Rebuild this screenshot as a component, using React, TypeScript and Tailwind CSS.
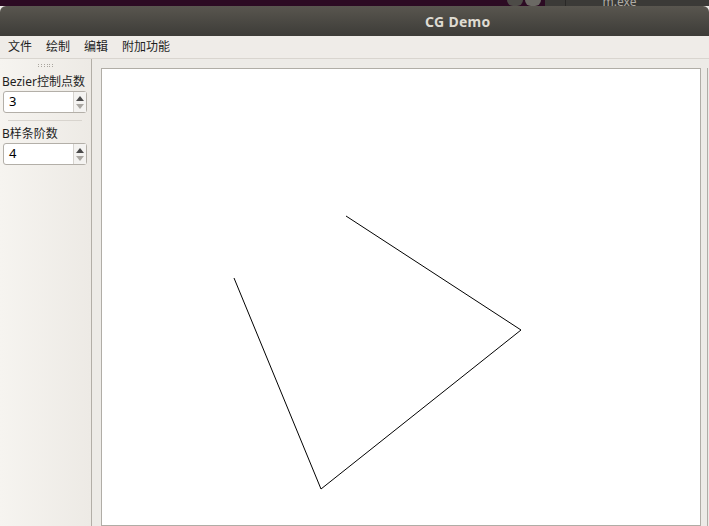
import React from 'react';

const font = { fontFamily: '"Noto Sans", "Noto Sans CJK SC", sans-serif' };

function SpinBox({ value }: { value: string }) {
  return (
    <div className="ml-[3px] flex h-[22px] w-[84px] rounded-[3px] border border-[#b3afa8] bg-white">
      <div className="flex flex-1 items-center pl-[5px] text-[13px] text-black">{value}</div>
      <div className="flex w-[13px] flex-col items-center justify-center gap-[3px] border-l border-[#d6d3ce] bg-[#f4f3f1]">
        <svg width="8" height="5" viewBox="0 0 8 5">
          <path d="M0 5 L4 0 L8 5 Z" fill="#4a4a4a" />
        </svg>
        <svg width="8" height="5" viewBox="0 0 8 5">
          <path d="M0 0 L8 0 L4 5 Z" fill="#aaa7a2" />
        </svg>
      </div>
    </div>
  );
}

function Handle() {
  return (
    <div className="ml-[38px] mt-[5px] grid w-[16px] grid-cols-6 gap-x-[1px] gap-y-[1px]">
      {Array.from({ length: 12 }).map((_, i) => (
        <div key={i} className="h-[1px] w-[1px] bg-[#a9a59e]" />
      ))}
    </div>
  );
}

export default function App() {
  return (
    <div className="flex h-[526px] w-[709px] flex-col overflow-hidden bg-[#edebe7]" style={font}>
      {/* desktop strip behind the window */}
      <div className="flex h-[6px] shrink-0">
        <div className="w-[507px] bg-[#2c0b23]" />
        <div className="flex w-[38px] items-end gap-[2px] bg-[#2c0b23]">
          <div className="h-[6px] w-[16px] rounded-b-full bg-[#4d4b47]" />
          <div className="h-[6px] w-[16px] rounded-b-full bg-[#6b6964]" />
        </div>
        <div className="w-[20px] bg-[#3b3a37]" />
        <div className="flex-1 overflow-hidden border-l border-[#2a2927] bg-[#3b3a37] pl-[25px] text-[12px] leading-[4px] text-[#aeaba4]">
          _&nbsp;&nbsp;m.exe
        </div>
      </div>

      {/* title bar */}
      <div className="flex h-[30px] shrink-0 items-center rounded-t-[6px] bg-gradient-to-b from-[#59564f] to-[#3d3c38] pl-[425px]">
        <span className="text-[14px] font-bold tracking-[0.3px] text-[#dfdbd2]">CG Demo</span>
      </div>

      {/* menu bar */}
      <div className="flex h-[23px] shrink-0 items-center gap-[14px] border-b border-[#d9d5cf] bg-[#efece8] pl-[8px] text-[12px] text-[#1e1e1e]">
        <span>文件</span>
        <span>绘制</span>
        <span>编辑</span>
        <span>附加功能</span>
      </div>

      <div className="flex min-h-0 flex-1">
        {/* dock */}
        <div className="flex w-[92px] shrink-0 flex-col border-r border-[#b2aea7] bg-gradient-to-r from-[#f6f4f0] to-[#edeae5]">
          <Handle />
          <div className="ml-[2px] mt-[7px] text-[12px] leading-[16px] text-[#1e1e1e]">Bezier控制点数</div>
          <div className="mt-[1px]">
            <SpinBox value="3" />
          </div>
          <div className="ml-[8px] mt-[7px] h-[2px] w-[74px] border-t border-[#d8d4ce] border-b-white" />
          <div className="ml-[2px] mt-[4px] text-[12px] leading-[16px] text-[#1e1e1e]">B样条阶数</div>
          <div className="mt-[1px]">
            <SpinBox value="4" />
          </div>
        </div>

        {/* central area */}
        <div className="flex flex-1 pl-[9px] pt-[9px]">
          <div className="relative w-[600px] shrink-0 border border-[#b0ada6] bg-white">
            <svg className="absolute left-0 top-0" width="598" height="460" viewBox="0 0 598 460">
              <polyline
                points="132,209 219,420 419,261 244,147"
                fill="none"
                stroke="#000"
                strokeWidth="1"
              />
            </svg>
          </div>
          <div className="ml-[6px] w-[2px] border-l border-[#b0ada6]" />
        </div>
      </div>
    </div>
  );
}
